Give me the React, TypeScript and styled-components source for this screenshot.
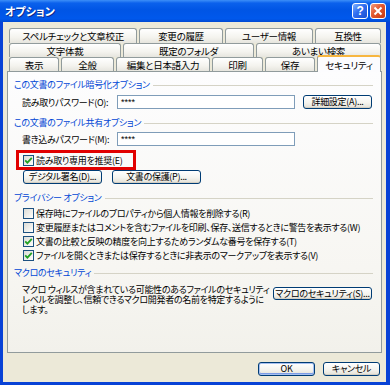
import React from "react";
import styled, { createGlobalStyle } from "styled-components";

const GlobalStyle = createGlobalStyle`
  html, body {
    margin: 0;
    padding: 0;
    background: #ECE9D8;
  }
  body {
    font-family: "Noto Sans CJK JP", "Noto Sans", sans-serif;
    font-size: 9px;
    letter-spacing: -0.3px;
    font-feature-settings: "palt";
    color: #000;
  }
`;

const Window = styled.div`
  width: 390px;
  height: 385px;
  display: flex;
  flex-direction: column;
  overflow: hidden;
`;

const TitleBar = styled.div`
  height: 22px;
  flex: none;
  display: flex;
  align-items: center;
  padding: 0 4px 0 5px;
  box-sizing: border-box;
  background: linear-gradient(
    180deg,
    #3d8ff8 0%,
    #0b61ec 14%,
    #0055e5 45%,
    #0058ec 85%,
    #004ad2 100%
  );
`;

const TitleText = styled.span`
  flex: 1;
  color: #fff;
  font-weight: bold;
  font-size: 11px;
  letter-spacing: 0;
  text-shadow: 1px 1px 0 #0a2a8a;
`;

const CaptionButton = styled.div<{ $kind: "help" | "close" }>`
  width: 16px;
  height: 16px;
  box-sizing: border-box;
  margin-left: 2px;
  border: 1px solid #fff;
  border-radius: 3px;
  display: flex;
  align-items: center;
  justify-content: center;
  color: #fff;
  font-family: "Liberation Sans", sans-serif;
  font-weight: bold;
  font-size: 12px;
  background: ${(p) =>
    p.$kind === "close"
      ? "linear-gradient(135deg, #f39a7c 0%, #e1582f 45%, #c63a12 100%)"
      : "linear-gradient(135deg, #7fb0ff 0%, #2f6ef0 45%, #1c4fd0 100%)"};
`;

const Frame = styled.div`
  flex: 1;
  display: flex;
  flex-direction: column;
  background: #ece9d8;
  border-left: 3px solid #0842d6;
  border-right: 4px solid #0842d6;
  border-bottom: 3px solid #0842d6;
  padding: 6px 4px 0 4px;
`;

const TabStrip = styled.div`
  display: flex;
  flex-direction: column;
  padding-left: 2px;
`;

const TabRow = styled.div<{ $h: number }>`
  display: flex;
  gap: 2px;
  height: ${(p) => p.$h}px;
`;

const Tab = styled.div<{ $w: number; $active?: boolean }>`
  width: ${(p) => p.$w}px;
  box-sizing: border-box;
  border: 1px solid #919b9c;
  border-bottom: none;
  border-radius: 3px 3px 0 0;
  display: flex;
  align-items: center;
  justify-content: center;
  white-space: nowrap;
  line-height: 12px;
  font-size: 9.5px;
  background: linear-gradient(180deg, #ffffff 0%, #f4f3ee 60%, #e6e5de 100%);
  ${(p) =>
    p.$active &&
    `
    position: relative;
    z-index: 1;
    margin-top: -2px;
    margin-bottom: -1px;
    background: #fcfcfe;
    border-top: 2px solid #f7b63f;
  `}
`;

const Panel = styled.div`
  height: 282px;
  box-sizing: border-box;
  border: 1px solid #919b9c;
  background: linear-gradient(180deg, #fdfdfe 0%, #f7f6f2 70%, #f2f1eb 100%);
  padding: 7px 8px 0 6px;
  display: flex;
  flex-direction: column;
`;

const Heading = styled.div<{ $mt: number }>`
  display: flex;
  align-items: center;
  gap: 3px;
  height: 12px;
  line-height: 12px;
  margin-top: ${(p) => p.$mt}px;
  color: #0046d5;
  white-space: nowrap;
  &::after {
    content: "";
    flex: 1;
    height: 1px;
    background: #d5d3c6;
  }
`;

const FieldRow = styled.div<{ $mt: number }>`
  display: flex;
  align-items: center;
  height: 14px;
  margin-top: ${(p) => p.$mt}px;
  padding-left: 8px;
`;

const FieldLabel = styled.span`
  width: 95px;
  white-space: nowrap;
`;

const TextBox = styled.div`
  width: 178px;
  height: 14px;
  box-sizing: border-box;
  border: 1px solid #7f9db9;
  background: #fff;
  font-family: "Liberation Sans", sans-serif;
  font-size: 9px;
  letter-spacing: 0;
  line-height: 12px;
  padding-left: 3px;
`;

const Button = styled.div<{ $w: number; $default?: boolean }>`
  width: ${(p) => p.$w}px;
  height: 14px;
  flex: none;
  box-sizing: border-box;
  border: 1px solid #003c74;
  border-radius: 3px;
  display: flex;
  align-items: center;
  justify-content: center;
  white-space: nowrap;
  line-height: 12px;
  background: linear-gradient(180deg, #ffffff 0%, #f5f4ef 55%, #e3e0d6 100%);
  box-shadow: ${(p) =>
    p.$default
      ? "inset 0 0 0 1px #a6c0f0, inset 0 -1px 0 1px #7c9ce6"
      : "inset 0 -1px 0 #d4cfc3"};
`;

const DetailButton = styled(Button)`
  margin-left: 8px;
`;

const RedBox = styled.div`
  margin: 4px 0 0 2px;
  width: 120px;
  height: 20px;
  box-sizing: border-box;
  border: 3px solid #e10000;
  padding-left: 4px;
  display: flex;
  align-items: center;
`;

const CheckRow = styled.div`
  display: flex;
  align-items: center;
  gap: 2px;
  height: 14px;
  white-space: nowrap;
`;

const CheckList = styled.div`
  display: flex;
  flex-direction: column;
  margin-top: 2px;
  padding-left: 9px;
`;

const Box = styled.span`
  width: 11px;
  height: 11px;
  box-sizing: border-box;
  flex: none;
  border: 1px solid #1c5180;
  background: linear-gradient(135deg, #dcdcd7 0%, #f4f4f0 70%, #ffffff 100%);
  display: flex;
  align-items: center;
  justify-content: center;
`;

const ButtonRow = styled.div`
  display: flex;
  gap: 10px;
  padding-left: 9px;
`;

const MacroRow = styled.div`
  display: flex;
  align-items: flex-start;
  margin-top: 6px;
  padding-left: 8px;
`;

const MacroText = styled.p`
  margin: 0;
  line-height: 10px;
  white-space: nowrap;
`;

const MacroButton = styled(Button)`
  height: 13px;
  margin: 2px 1px 0 auto;
`;

const Footer = styled.div`
  display: flex;
  justify-content: flex-end;
  gap: 8px;
  margin-top: 9px;
  padding-right: 2px;
`;

const Check = ({ checked }: { checked?: boolean }) => (
  <Box>
    {checked && (
      <svg width="9" height="9" viewBox="0 0 9 9">
        <path
          d="M1.2 4.3 L3.4 6.6 L7.8 1.8"
          fill="none"
          stroke="#21a121"
          strokeWidth="1.8"
        />
      </svg>
    )}
  </Box>
);

const tabRows = [
  {
    h: 15,
    tabs: [
      { label: "スペルチェックと文章校正", w: 128 },
      { label: "変更の履歴", w: 84 },
      { label: "ユーザー情報", w: 88 },
      { label: "互換性", w: 66 },
    ],
  },
  {
    h: 14,
    tabs: [
      { label: "文字体裁", w: 112 },
      { label: "既定のフォルダ", w: 131 },
      { label: "あいまい検索", w: 125 },
    ],
  },
  {
    h: 14,
    tabs: [
      { label: "表示", w: 50 },
      { label: "全般", w: 53 },
      { label: "編集と日本語入力", w: 94 },
      { label: "印刷", w: 51 },
      { label: "保存", w: 50 },
      { label: "セキュリティ", w: 64, active: true },
    ],
  },
];

const privacy = [
  { label: "保存時にファイルのプロパティから個人情報を削除する(R)", checked: false },
  {
    label:
      "変更履歴またはコメントを含むファイルを印刷、保存、送信するときに警告を表示する(W)",
    checked: false,
  },
  { label: "文書の比較と反映の精度を向上するためランダムな番号を保存する(T)", checked: true },
  { label: "ファイルを開くときまたは保存するときに非表示のマークアップを表示する(V)", checked: true },
];

const App = () => {
  return (
    <Window>
      <GlobalStyle />
      <TitleBar>
        <TitleText>オプション</TitleText>
        <CaptionButton $kind="help">?</CaptionButton>
        <CaptionButton $kind="close">
          <svg width="10" height="10" viewBox="0 0 10 10">
            <path d="M1.5 1.5 L8.5 8.5 M8.5 1.5 L1.5 8.5" stroke="#fff" strokeWidth="2" />
          </svg>
        </CaptionButton>
      </TitleBar>
      <Frame>
        <TabStrip>
          {tabRows.map((row, i) => (
            <TabRow key={i} $h={row.h}>
              {row.tabs.map((t) => (
                <Tab key={t.label} $w={t.w} $active={"active" in t && t.active}>
                  {t.label}
                </Tab>
              ))}
            </TabRow>
          ))}
        </TabStrip>
        <Panel>
          <Heading $mt={0}>この文書のファイル暗号化オプション</Heading>
          <FieldRow $mt={4}>
            <FieldLabel>読み取りパスワード(O):</FieldLabel>
            <TextBox>****</TextBox>
            <DetailButton $w={69}>詳細設定(A)...</DetailButton>
          </FieldRow>
          <Heading $mt={8}>この文書のファイル共有オプション</Heading>
          <FieldRow $mt={3}>
            <FieldLabel>書き込みパスワード(M):</FieldLabel>
            <TextBox>****</TextBox>
          </FieldRow>
          <RedBox>
            <CheckRow>
              <Check checked />
              読み取り専用を推奨(E)
            </CheckRow>
          </RedBox>
          <ButtonRow>
            <Button $w={79}>デジタル署名(D)...</Button>
            <Button $w={89}>文書の保護(P)...</Button>
          </ButtonRow>
          <Heading $mt={8}>プライバシー オプション</Heading>
          <CheckList>
            {privacy.map((p) => (
              <CheckRow key={p.label}>
                <Check checked={p.checked} />
                {p.label}
              </CheckRow>
            ))}
          </CheckList>
          <Heading $mt={5}>マクロのセキュリティ</Heading>
          <MacroRow>
            <MacroText>
              マクロ ウィルスが含まれている可能性のあるファイルのセキュリティ
              <br />
              レベルを調整し、信頼できるマクロ開発者の名前を特定するように
              <br />
              します。
            </MacroText>
            <MacroButton $w={99}>マクロのセキュリティ(S)...</MacroButton>
          </MacroRow>
        </Panel>
        <Footer>
          <Button $w={57} $default>
            OK
          </Button>
          <Button $w={57}>キャンセル</Button>
        </Footer>
      </Frame>
    </Window>
  );
};

export default App;
